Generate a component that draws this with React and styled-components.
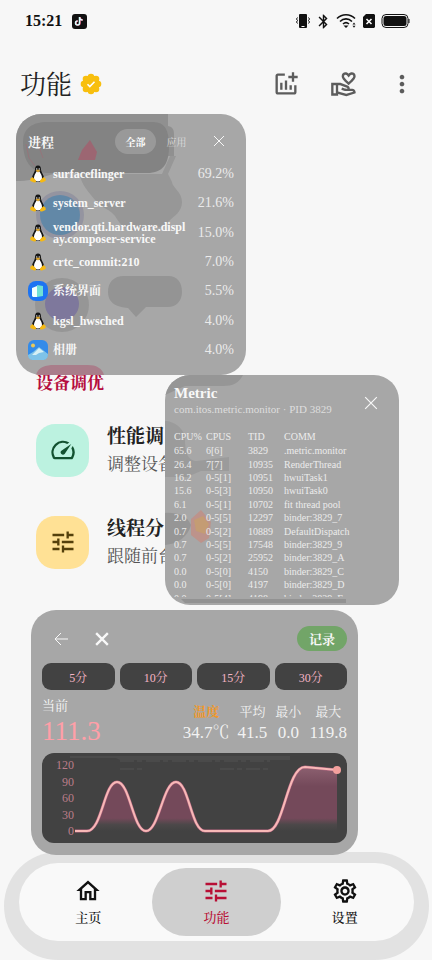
import React from 'react';
import styled, { createGlobalStyle } from 'styled-components';
import {
  MdBluetooth,
  MdMoreVert,
  MdOutlineAddchart,
  MdOutlineHome,
  MdOutlineSettings,
  MdOutlineVolunteerActivism,
  MdSpeed,
  MdTune,
} from 'react-icons/md';

const GlobalStyle = createGlobalStyle`
  * {
    box-sizing: border-box;
  }

  body {
    margin: 0;
    background: #f7f7f7;
    color: #222;
    font-family: 'Liberation Serif', 'Noto Serif CJK SC', 'Noto Sans CJK SC', serif;
  }

  button {
    margin: 0;
    padding: 0;
    border: 0;
    background: none;
    color: inherit;
    font: inherit;
    cursor: pointer;
  }

  svg {
    display: block;
    flex: none;
  }
`;

const Page = styled.div`
  position: relative;
  display: flex;
  flex-direction: column;
  min-height: 100vh;
  overflow: hidden;
`;

const StatusBar = styled.div`
  display: flex;
  align-items: center;
  justify-content: space-between;
  height: 42px;
  padding: 0 22px 0 25px;
  color: #111;
`;

const StatusGroup = styled.div`
  display: flex;
  align-items: center;
  gap: ${({ $gap }) => $gap}px;
`;

const Clock = styled.time`
  font-size: 16px;
  font-weight: 700;
  line-height: 20px;
`;

const Header = styled.header`
  display: flex;
  align-items: center;
  justify-content: space-between;
  height: 84px;
  padding: 0 16px 0 20px;
`;

const Heading = styled.div`
  display: flex;
  align-items: center;
  gap: 8px;
`;

const Title = styled.h1`
  margin: 0;
  padding-top: 4px;
  font-size: 26px;
  font-weight: 400;
  line-height: 36px;
`;

const Actions = styled.div`
  display: flex;
  gap: 30px;
  color: #5c5c5c;
`;

const Main = styled.main`
  flex: 1;
  padding: 246px 36px 120px;
`;

const SectionTitle = styled.h2`
  margin: 0;
  color: #b50d3e;
  font-size: 17px;
  font-weight: 700;
  line-height: 24px;
`;

const Features = styled.div`
  display: flex;
  flex-direction: column;
  gap: 36px;
  padding-top: 26px;
`;

const Feature = styled.button`
  display: flex;
  align-items: center;
  gap: 18px;
  text-align: left;
`;

const FeatureIcon = styled.span`
  display: flex;
  align-items: center;
  justify-content: center;
  width: 53px;
  height: 53px;
  border-radius: 19px;
  background: ${({ $background }) => $background};
  color: ${({ $color }) => $color};
`;

const FeatureText = styled.span`
  display: flex;
  flex-direction: column;
  gap: 2px;
  padding-top: 2px;
  color: #555;
  font-size: 17px;
  line-height: 26px;
`;

const FeatureName = styled.strong`
  color: #222;
  font-size: 19px;
`;

// Floating windows sit over the page
const FloatingWindow = styled.section`
  position: absolute;
  z-index: 1;
  overflow: hidden;
  border-radius: 25px;
  background: #a7a7a7;
  color: #f8f8f8;
`;

const ProcessWindow = styled(FloatingWindow)`
  top: 114px;
  left: 16px;
  width: 230px;
  padding: 10px 12px;
`;

const MetricWindow = styled(FloatingWindow)`
  top: 375px;
  left: 165px;
  width: 234px;
  padding: 8px 9px;
`;

const ChartWindow = styled(FloatingWindow)`
  top: 610px;
  left: 31px;
  right: 74px;
  padding: 16px 11px 12px;
`;

const Backdrop = styled.svg`
  position: absolute;
  top: 0;
  left: 0;
  z-index: -1;
`;

const ProcessHead = styled.div`
  display: flex;
  align-items: center;
  height: 34px;
`;

const ProcessTitle = styled.h3`
  flex: 1;
  margin: 0;
  font-size: 13px;
  font-weight: 700;
`;

const Filter = styled.button`
  width: 41px;
  height: 25px;
  border-radius: 13px;
  background: ${({ $active }) => ($active ? '#999' : 'transparent')};
  color: ${({ $active }) => ($active ? '#fff' : '#dcdcdc')};
  font-size: 10px;
  font-weight: ${({ $active }) => ($active ? 700 : 400)};
`;

const CloseButton = styled.button`
  display: flex;
  align-items: center;
  justify-content: center;
  width: 24px;
  height: 24px;
`;

const ProcessClose = styled(CloseButton)`
  margin: 0 3px 0 10px;
`;

const ProcessList = styled.ul`
  display: grid;
  grid-auto-rows: 1fr;
  height: 206px;
  margin: 1px 0 0;
  padding: 0;
  list-style: none;
`;

const ProcessRow = styled.li`
  display: grid;
  grid-template-columns: 20px 137px 1fr;
  align-items: center;
  column-gap: 5px;
`;

const ProcessIcon = styled.span`
  display: flex;
  justify-content: center;
`;

const ProcessName = styled.span`
  font-size: 12px;
  font-weight: 700;
  line-height: 12px;
  word-break: break-all;
`;

const ProcessLoad = styled.span`
  color: #ebebeb;
  font-size: 14px;
  text-align: right;
`;

const MetricHead = styled.div`
  display: flex;
  align-items: flex-start;
  justify-content: space-between;
  height: 46px;
`;

const MetricTitle = styled.h3`
  margin: 0;
  font-size: 15px;
  font-weight: 700;
  line-height: 20px;
`;

const MetricMeta = styled.p`
  margin: 0;
  color: #dedede;
  font-size: 11px;
  line-height: 12px;
`;

const MetricClose = styled(CloseButton)`
  margin: 8px 7px 0 0;
`;

const TableClip = styled.div`
  height: 168px;
  overflow: hidden;
`;

const Table = styled.table`
  width: 100%;
  height: 176px;
  border-collapse: collapse;
  table-layout: fixed;
  color: #ececec;
  font-size: 10px;
  line-height: 11px;
  text-align: left;
  white-space: nowrap;

  th,
  td {
    padding: 0;
  }

  th {
    height: 15px;
    font-weight: 400;
  }
`;

const Column = styled.col`
  width: ${({ $width }) => $width};
`;

const Toolbar = styled.div`
  display: flex;
  align-items: center;
  gap: 17px;
  height: 25px;
  padding-left: 7px;
`;

const RecordButton = styled.button`
  width: 50px;
  height: 25px;
  margin-left: auto;
  border-radius: 13px;
  background: #72a568;
  font-size: 13px;
  font-weight: 700;
`;

const Ranges = styled.div`
  display: grid;
  grid-template-columns: repeat(4, 1fr);
  gap: 5px;
  margin-top: 12px;
`;

const RangeButton = styled.button`
  height: 27px;
  border-radius: 9px;
  background: #424242;
  color: #f5b5c6;
  font-size: 12px;
`;

const Stats = styled.div`
  display: flex;
  align-items: flex-start;
  gap: 8px;
  height: 63px;
  padding-top: 7px;
`;

const Current = styled.div`
  flex: 1;
  font-size: 13px;
  line-height: 18px;
`;

const CurrentValue = styled.div`
  color: #ff9fa8;
  font-size: 27px;
  line-height: 32px;
`;

const Stat = styled.div`
  padding-top: 5px;
  color: ${({ $color }) => $color || '#f2f2f2'};
  font-size: 13px;
  font-weight: ${({ $color }) => ($color ? 700 : 400)};
  line-height: 20px;
  text-align: center;
`;

const StatValue = styled.div`
  color: #f2f2f2;
  font-size: 17px;
  font-weight: 400;
  line-height: 22px;
`;

const Plot = styled.svg`
  width: 100%;
  height: auto;
  border-radius: 12px;
  background: #424242;
`;

const TabBar = styled.nav`
  position: absolute;
  right: 18px;
  bottom: 19px;
  left: 19px;
  display: grid;
  grid-template-columns: repeat(3, 1fr);
  padding: 5px;
  border-radius: 39px;
  background: #f9f9f9;
  box-shadow: 0 4px 0 15px #e2e2e2;
`;

const Tab = styled.a`
  display: flex;
  flex-direction: column;
  align-items: center;
  gap: 3px;
  height: 68px;
  padding-top: 9px;
  border-radius: 34px;
  background: ${({ $active }) => ($active ? '#cfcfcf' : 'transparent')};
  color: ${({ $active }) => ($active ? '#b80f35' : '#111')};
  font-size: 13px;
  font-weight: 500;
  line-height: 20px;
  text-decoration: none;
`;

const processes = [
  { name: 'surfaceflinger', load: '69.2%' },
  { name: 'system_server', load: '21.6%' },
  { name: 'vendor.qti.hardware.display.composer-service', load: '15.0%' },
  { name: 'crtc_commit:210', load: '7.0%' },
  { name: '系统界面', load: '5.5%', icon: 'system' },
  { name: 'kgsl_hwsched', load: '4.0%' },
  { name: '相册', load: '4.0%', icon: 'gallery' },
];

const threads = [
  ['65.6', '6[6]', '3829', '.metric.monitor'],
  ['26.4', '7[7]', '10935', 'RenderThread'],
  ['16.2', '0-5[1]', '10951', 'hwuiTask1'],
  ['15.6', '0-5[3]', '10950', 'hwuiTask0'],
  ['6.1', '0-5[1]', '10702', 'fit thread pool'],
  ['2.0', '0-5[5]', '12297', 'binder:3829_7'],
  ['0.7', '0-5[2]', '10889', 'DefaultDispatch'],
  ['0.7', '0-5[5]', '17548', 'binder:3829_9'],
  ['0.7', '0-5[2]', '25952', 'binder:3829_A'],
  ['0.0', '0-5[0]', '4150', 'binder:3829_C'],
  ['0.0', '0-5[0]', '4197', 'binder:3829_D'],
  ['0.0', '0-5[4]', '4198', 'binder:3829_E'],
];

const stats = [
  { label: '温度', value: '34.7℃', color: '#f0982a' },
  { label: '平均', value: '41.5' },
  { label: '最小', value: '0.0' },
  { label: '最大', value: '119.8' },
];

const ticks = [
  { value: 120, y: 16 },
  { value: 90, y: 33 },
  { value: 60, y: 49 },
  { value: 30, y: 66 },
  { value: 0, y: 82 },
];

const Badge = () => (
  <svg width="22" height="22" viewBox="0 0 22 22" aria-hidden="true">
    <g fill="#f8bf0e">
      <circle cx="11" cy="11" r="8.500" />
      <circle cx="11" cy="4" r="3.300" />
      <circle cx="16" cy="6" r="3.300" />
      <circle cx="18" cy="11" r="3.300" />
      <circle cx="16" cy="16" r="3.300" />
      <circle cx="11" cy="18" r="3.300" />
      <circle cx="6" cy="16" r="3.300" />
      <circle cx="4" cy="11" r="3.300" />
      <circle cx="6" cy="6" r="3.300" />
    </g>
    <path d="M7.500 11.200l2.300 2.300 4.700-4.700" fill="none" stroke="#fff" strokeWidth="1.600" />
  </svg>
);

const Tux = () => (
  <svg width="16" height="18" viewBox="0 0 32 36" aria-hidden="true">
    <path
      d="M16 1c-5 0-6 4-6 8 0 5-5 9-6 16-1 6 4 9 12 9s13-3 12-9c-1-7-6-11-6-16 0-4-1-8-6-8z"
      fill="#151515"
    />
    <path
      d="M13 13c-2 4-5 7-5 13 0 5 3 7 8 7s8-2 8-7c0-6-3-9-5-13-1-1-5-1-6 0z"
      fill="#fff"
    />
    <ellipse cx="13.500" cy="8" rx="1.300" ry="1.800" fill="#bbb" />
    <ellipse cx="18.500" cy="8" rx="1.300" ry="1.800" fill="#bbb" />
    <path d="M11 11l5-2 5 2-5 4z" fill="#d9a12a" />
    <path d="M5 24l7 7c1 3-1 4-4 4l-7-3c-1-1 0-3 0-5 1-1 3-1 4-3z" fill="#f6b913" />
    <path d="M27 24l-7 7c-1 3 1 4 4 4l7-3c1-1 0-3 0-5-1-1-3-1-4-3z" fill="#f6b913" />
  </svg>
);

const SystemIcon = () => (
  <svg width="20" height="20" viewBox="0 0 20 20" aria-hidden="true">
    <rect width="20" height="20" rx="8" fill="#1d74f2" />
    <path d="M9 4l6 1v10l-6 1z" fill="#6fe0d5" />
    <path d="M4 7l5-2v11H5l-1-1z" fill="#f4fffd" />
  </svg>
);

const GalleryIcon = () => (
  <svg width="20" height="20" viewBox="0 0 20 20" aria-hidden="true">
    <rect width="20" height="20" rx="6" fill="#338be9" />
    <circle cx="5" cy="5.500" r="2" fill="#e8c95a" />
    <path d="M0 15l5-3 6-5 9 7c0 4-2 6-6 6H6c-4 0-6-2-6-5z" fill="#7fc3e8" />
    <path d="M4 15l7-7 5 4-5 1-3 2z" fill="#d6f0f5" />
  </svg>
);

const Cross = ({ size = 12, weight = 1 }) => (
  <svg
    width={size}
    height={size}
    viewBox="0 0 12 12"
    stroke="currentColor"
    strokeWidth={weight}
    aria-hidden="true"
  >
    <path d="M1 1l10 10M11 1L1 11" />
  </svg>
);

const processIcon = (icon) => {
  if (icon === 'system') return <SystemIcon />;
  if (icon === 'gallery') return <GalleryIcon />;
  return <Tux />;
};

const StatusIcons = () => (
  <StatusGroup $gap={4}>
    <svg width="16" height="16" viewBox="0 0 16 16" fill="none" stroke="#111">
      <rect x="4" y="1" width="8" height="14" rx="1" fill="#111" stroke="none" />
      <path d="M6.500 13.500h3" stroke="#fff" />
      <path d="M2.500 4.500l-1 1.500 1 1.500-1 1.500 1 1.500M13.500 4.500l1 1.500-1 1.500 1 1.500-1 1.500" />
    </svg>
    <MdBluetooth size={17} />
    <svg width="21" height="16" viewBox="0 0 21 16" fill="none" stroke="#111" strokeWidth="1.600">
      <path d="M1 5.500c5-5 13-5 18 0M4 8.500c3.500-3.500 8.500-3.500 12 0M7 11c2-1.800 4-1.800 6 0" />
      <path d="M7.500 12.500h5L10 15z" fill="#111" stroke="none" />
      <path d="M16.500 11.500l1.500-2 1.500 2zM16.500 12.800h3l-1.500 2z" fill="#111" stroke="none" />
    </svg>
    <svg width="16" height="16" viewBox="0 0 16 16">
      <path d="M5 1h8l1 1v12l-1 1H3l-1-1V4z" fill="#111" />
      <path d="M5.500 6l5 5M10.500 6l-5 5" stroke="#fff" strokeWidth="1.600" />
    </svg>
    <svg width="29" height="16" viewBox="0 0 29 16">
      <rect x="1" y="1.500" width="26" height="13" rx="4" fill="none" stroke="#111" />
      <rect x="2.500" y="3" width="23" height="10" rx="2.500" fill="#111" />
      <path d="M27.500 6v4h1V6z" fill="#111" />
    </svg>
  </StatusGroup>
);

const Processes = () => (
  <ProcessWindow>
    <Backdrop width="230" height="261" viewBox="0 0 230 261" aria-hidden="true">
      <path
        d="M64 60h82l8-18h6l-8 18 4 8c0 5 10 10 10 20s-8 14-13 19-8 7-14 7c-9 0-12 4-24 2-9-2-12-8-16-14-5-7-14-8-19-15-6-7-16-18-16-27z"
        fill="#979797"
      />
      <path
        d="M0 0h152v12c5 1 6 4 6 8v22h-6c-4 0-6 4-8 8-5 7-14 9-36 9H48c-16 0-24 8-48 8z"
        fill="#909090"
      />
      <path d="M7 28c0-14 10-20 24-20h106c12 0 16 8 16 24 0 18-6 27-22 27H32C14 59 7 46 7 28z" fill="#838383" />
      <path d="M66 36l8-10 7 12-2 8H62z" fill="#9c6672" />
      <path d="M10 30l3 14 6 8M22 30l5 14" fill="none" stroke="#95757b" />
      <circle cx="44" cy="101" r="24" fill="#9494a0" />
      <circle cx="44" cy="101" r="20" fill="#6288a7" />
      <circle cx="46" cy="191" r="27" fill="#969696" />
      <circle cx="46" cy="190" r="17" fill="#7e789c" />
      <path
        d="M108 162h44c10 0 14 7 14 16s-6 15-14 15h-22l-10 10-8-9c-10-1-20-4-20-16 0-10 6-16 16-16z"
        fill="#949494"
      />
      <path d="M20 261c2-8 10-10 18-10h34c8 0 14 3 16 10z" fill="#a97d8a" />
    </Backdrop>
    <ProcessHead>
      <ProcessTitle>进程</ProcessTitle>
      <Filter $active aria-pressed="true">全部</Filter>
      <Filter aria-pressed="false">应用</Filter>
      <ProcessClose aria-label="关闭">
        <Cross />
      </ProcessClose>
    </ProcessHead>
    <ProcessList>
      {processes.map(({ name, load, icon }) => (
        <ProcessRow key={name}>
          <ProcessIcon>{processIcon(icon)}</ProcessIcon>
          <ProcessName>{name}</ProcessName>
          <ProcessLoad>{load}</ProcessLoad>
        </ProcessRow>
      ))}
    </ProcessList>
  </ProcessWindow>
);

const Metric = () => (
  <MetricWindow>
    <Backdrop width="234" height="230" viewBox="0 0 234 230" aria-hidden="true">
      <path d="M0 0h78c-4 8-10 11-20 11H20L0 20z" fill="#969696" />
      <path d="M0 46c9 0 20 8 20 18 0 12 2 22 12 22l32-4v14H36l-14 6H0z" fill="#9b9b9b" />
      <path d="M0 138c10-1 22 2 26 12-3 12-14 19-26 20z" fill="#969696" />
      <path d="M26 144l10-9 10 12-2 16-8 5-10-8z" fill="#bd938b" />
      <path d="M29 145l9-4 6 8-4 10-9-3z" fill="#c49c73" />
      <path d="M16 224h165v4H20z" fill="#929292" />
    </Backdrop>
    <MetricHead>
      <div>
        <MetricTitle>Metric</MetricTitle>
        <MetricMeta>com.itos.metric.monitor · PID 3829</MetricMeta>
      </div>
      <MetricClose aria-label="关闭">
        <Cross size={14} />
      </MetricClose>
    </MetricHead>
    <TableClip>
      <Table>
        <colgroup>
          <Column $width="32px" />
          <Column $width="42px" />
          <Column $width="36px" />
          <Column $width="auto" />
        </colgroup>
        <thead>
          <tr>
            <th scope="col">CPU%</th>
            <th scope="col">CPUS</th>
            <th scope="col">TID</th>
            <th scope="col">COMM</th>
          </tr>
        </thead>
        <tbody>
          {threads.map((thread) => (
            <tr key={thread[2]}>
              {thread.map((cell, index) => (
                <td key={index}>{cell}</td>
              ))}
            </tr>
          ))}
        </tbody>
      </Table>
    </TableClip>
  </MetricWindow>
);

const line =
  'M33 78H45C60 78 62 29 75 29S91 78 104 78S121 29 134 29S149 78 163 78H226C242 78 245 14 263 14L295 17';

const Recorder = () => (
  <ChartWindow>
    <Toolbar>
      <CloseButton aria-label="返回">
        <svg width="16" height="16" viewBox="0 0 16 16" fill="none" stroke="currentColor">
          <path d="M15 8H2M8 2L2 8l6 6" />
        </svg>
      </CloseButton>
      <CloseButton aria-label="关闭">
        <Cross size={14} weight={2} />
      </CloseButton>
      <RecordButton>记录</RecordButton>
    </Toolbar>
    <Ranges>
      {[5, 10, 15, 30].map((minutes) => (
        <RangeButton key={minutes}>{minutes}分</RangeButton>
      ))}
    </Ranges>
    <Stats>
      <Current>
        当前
        <CurrentValue>111.3</CurrentValue>
      </Current>
      {stats.map(({ label, value, color }) => (
        <Stat key={label} $color={color}>
          {label}
          <StatValue>{value}</StatValue>
        </Stat>
      ))}
    </Stats>
    <Plot viewBox="0 0 305 90" role="img" aria-label="111.3">
      <defs>
        <linearGradient id="fill" x1="0" y1="0" x2="0" y2="1">
          <stop offset="0" stopColor="#8c6070" />
          <stop offset="0.300" stopColor="#74495a" />
          <stop offset="0.800" stopColor="#74495a" />
          <stop offset="0.900" stopColor="#4c4849" />
          <stop offset="1" stopColor="#424242" />
        </linearGradient>
      </defs>
      <path d="M28 3h220v4H78l-4-2H28z" fill="#4b4b4b" />
      <path d="M78 8h150M78 16h22M178 16h48" fill="none" stroke="#525252" strokeDasharray="14 3 5 4" />
      <path d={`${line}V78z`} fill="url(#fill)" />
      <path d={line} fill="none" stroke="#b66680" strokeWidth="3" />
      <path d={line} fill="none" stroke="#f8b9b7" strokeWidth="2" />
      <circle cx="295" cy="17" r="4" fill="#f3a09d" />
      {ticks.map(({ value, y }) => (
        <text key={value} x="32" y={y} textAnchor="end" fontSize="12" fill="#bb7d8a">
          {value}
        </text>
      ))}
    </Plot>
  </ChartWindow>
);

const App = () => (
  <>
    <GlobalStyle />
    <Page>
      <StatusBar>
        <StatusGroup $gap={10}>
          <Clock>15:21</Clock>
          <svg width="15" height="15" viewBox="0 0 15 15" aria-hidden="true">
            <rect width="15" height="15" rx="3" fill="#111" />
            <path d="M8 3v6a2 2 0 1 1-2-2M8 3c0 2 1 3 3 3" fill="none" stroke="#f04770" strokeWidth="1.500" />
            <path d="M7.500 3v6a2 2 0 1 1-2-2M7.500 3c0 2 1 3 3 3" fill="none" stroke="#d9ffff" strokeWidth="1.500" />
          </svg>
        </StatusGroup>
        <StatusIcons />
      </StatusBar>
      <Header>
        <Heading>
          <Title>功能</Title>
          <Badge />
        </Heading>
        <Actions>
          <button aria-label="添加图表">
            <MdOutlineAddchart size={28} />
          </button>
          <button aria-label="支持">
            <MdOutlineVolunteerActivism size={28} />
          </button>
          <button aria-label="更多">
            <MdMoreVert size={28} />
          </button>
        </Actions>
      </Header>
      <Main>
        <SectionTitle>设备调优</SectionTitle>
        <Features>
          <Feature>
            <FeatureIcon $background="#bcf2e0" $color="#125130">
              <MdSpeed size={28} />
            </FeatureIcon>
            <FeatureText>
              <FeatureName>性能调</FeatureName>
              调整设备
            </FeatureText>
          </Feature>
          <Feature>
            <FeatureIcon $background="#ffe195" $color="#54400b">
              <MdTune size={28} />
            </FeatureIcon>
            <FeatureText>
              <FeatureName>线程分</FeatureName>
              跟随前台
            </FeatureText>
          </Feature>
        </Features>
      </Main>
      <TabBar>
        <Tab href="#home">
          <MdOutlineHome size={28} />
          主页
        </Tab>
        <Tab href="#features" $active aria-current="page">
          <MdTune size={28} />
          功能
        </Tab>
        <Tab href="#settings">
          <MdOutlineSettings size={28} />
          设置
        </Tab>
      </TabBar>
      <Processes />
      <Metric />
      <Recorder />
    </Page>
  </>
);

export default App;
